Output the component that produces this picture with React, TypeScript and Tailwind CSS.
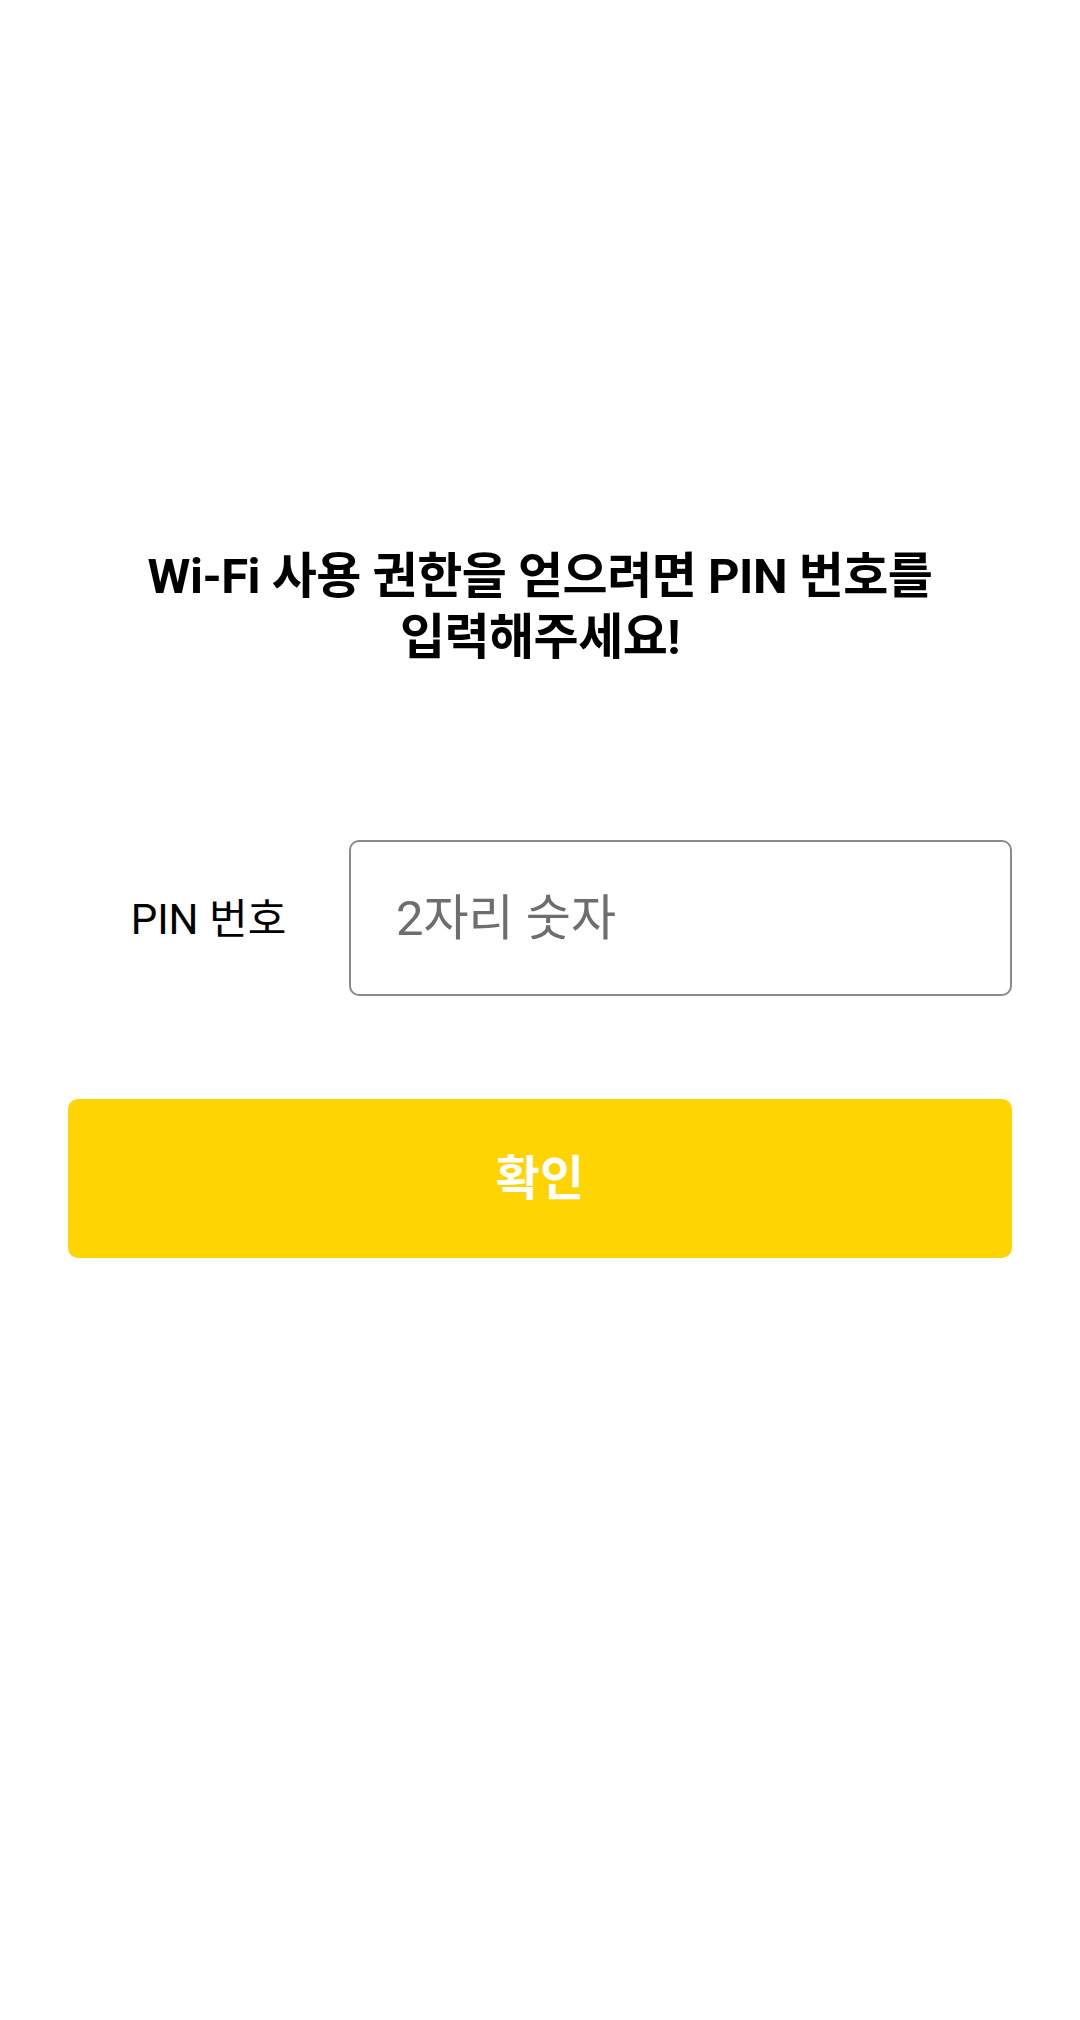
import React, { useState } from "react";

const FONT = { fontFamily: 'Roboto, "Noto Sans CJK KR", "Noto Sans", sans-serif' };

export default function App() {
    const [pin, setPin] = useState("");

    return (
        <div className="w-[1080px] min-h-[2020px] bg-white" style={FONT}>
            <div className="px-[68px] pt-[546px]">
                {/* Title */}
                <h1 className="text-center text-[49px] leading-[61px] font-bold text-black tracking-[-0.5px]">
                    Wi-Fi 사용 권한을 얻으려면 PIN 번호를
                    <br />
                    입력해주세요!
                </h1>

                {/* PIN row */}
                <div className="mt-[172px] flex items-center h-[156px]">
                    <label className="w-[281px] shrink-0 pt-[3px] text-center text-[42px] text-black">PIN 번호</label>
                    <input
                        value={pin}
                        onChange={e => setPin(e.target.value)}
                        placeholder="2자리 숫자"
                        className="flex-1 min-w-0 h-full rounded-[10px] border-2 border-[#8a8a8a] px-[45px] text-[49px] text-black placeholder:text-[#6e6e6e] outline-none"
                    />
                </div>

                {/* Confirm */}
                <button className="mt-[103px] w-full h-[159px] rounded-[10px] bg-[#ffd400] text-white text-[48px] font-bold">
                    확인
                </button>
            </div>
        </div>
    );
}
